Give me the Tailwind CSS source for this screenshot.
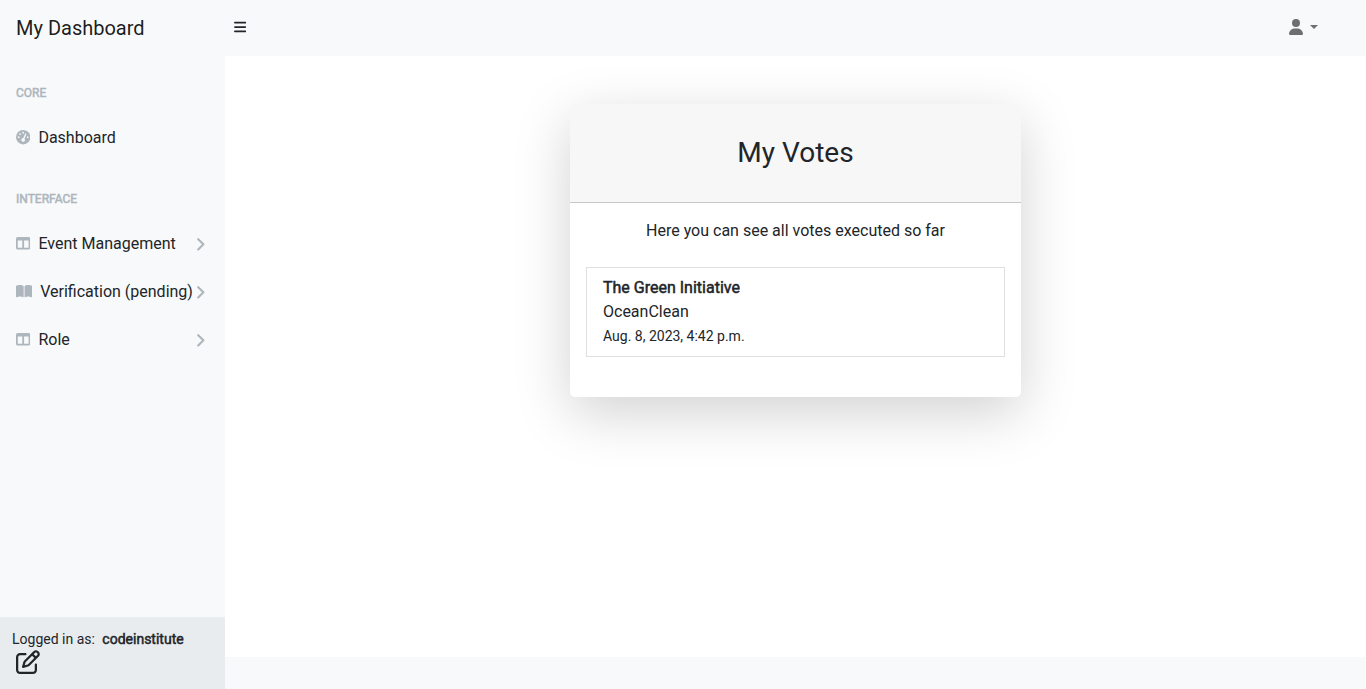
<!DOCTYPE html>
<html lang="en">
<head>
<meta charset="utf-8">
<title>My Dashboard</title>
<script src="https://cdn.jsdelivr.net/npm/@tailwindcss/browser@4"></script>
</head>
<body class="flex h-[689px] flex-col overflow-hidden bg-white font-['Roboto',sans-serif] text-base font-normal text-[#212529]">
<svg class="hidden">
  <symbol id="columns" viewBox="0 0 512 512"><path d="M0 96C0 60.7 28.7 32 64 32H448c35.3 0 64 28.7 64 64V416c0 35.3-28.7 64-64 64H64c-35.3 0-64-28.7-64-64V96zm64 64V416H224V160H64zm384 0H288V416H448V160z"/></symbol>
  <symbol id="angle" viewBox="0 0 8 13"><path d="M1.2 1.2 6.4 6.3 1.2 11.4" fill="none" stroke="currentColor" stroke-width="2.1" stroke-linecap="round" stroke-linejoin="round"/></symbol>
</svg>
<nav class="flex h-14 shrink-0 items-center bg-[#f8f9fa]">
  <a class="w-[225px] pl-4 text-xl text-black/90">My Dashboard</a>
  <button class="ml-2 mb-0.5" aria-label="Menu"><svg class="ml-[1px] h-[14px] w-[12.25px]" viewBox="0 0 448 512" fill="#212529"><path d="M0 96C0 78.3 14.3 64 32 64H416c17.7 0 32 14.3 32 32s-14.3 32-32 32H32C14.3 128 0 113.7 0 96zM0 256c0-17.7 14.3-32 32-32H416c17.7 0 32 14.3 32 32s-14.3 32-32 32H32c-17.7 0-32-14.3-32-32zM448 416c0 17.7-14.3 32-32 32H32c-17.7 0-32-14.3-32-32s14.3-32 32-32H416c17.7 0 32 14.3 32 32z"/></svg></button>
  <div class="mr-12 mb-0.5 ml-auto flex items-center gap-[7px] text-[#6d6e6e]">
    <svg class="h-4 w-[14px]" viewBox="0 0 448 512" fill="currentColor"><path d="M224 256A128 128 0 1 0 224 0a128 128 0 1 0 0 256zm-45.7 48C79.8 304 0 383.8 0 482.3C0 498.7 13.3 512 29.7 512H418.3c16.4 0 29.7-13.3 29.7-29.7C448 383.8 368.2 304 269.7 304H178.3z"/></svg>
    <span class="border-x-[4.8px] border-t-[4.8px] border-x-transparent border-t-current"></span>
  </div>
</nav>
<div class="flex min-h-0 grow">
  <aside class="flex w-[225px] shrink-0 flex-col bg-[#f8f9fa]">
    <div class="grow">
      <div class="px-4 pt-7 pb-3 text-xs leading-[18px] text-[#adb5bd]"><span class="[-webkit-text-stroke:0.5px_currentColor]">CORE</span></div>
      <a class="flex h-12 items-center px-4 pt-px pb-0.5"><svg class="mr-2 size-[14.4px] text-[#adb5bd]" viewBox="0 0 512 512" fill="currentColor"><path fill-rule="evenodd" d="M0 256a256 256 0 1 1 512 0A256 256 0 1 1 0 256zM288 96a32 32 0 1 0-64 0 32 32 0 1 0 64 0zM256 416c35.3 0 64-28.7 64-64c0-17.4-6.9-33.1-18.1-44.6L366 161.7c5.3-12.1-.2-26.3-12.3-31.6s-26.3 .2-31.6 12.3L257.9 288c-.6 0-1.3 0-1.9 0c-35.3 0-64 28.7-64 64s28.7 64 64 64zM176 144a32 32 0 1 0-64 0 32 32 0 1 0 64 0zM96 288a32 32 0 1 0 0-64 32 32 0 1 0 0 64zm352-32a32 32 0 1 0-64 0 32 32 0 1 0 64 0z"/></svg>Dashboard</a>
      <div class="px-4 pt-7 pb-3 text-xs leading-[18px] text-[#adb5bd]"><span class="[-webkit-text-stroke:0.5px_currentColor]">INTERFACE</span></div>
      <a class="flex h-12 items-center px-4 pt-px pb-0.5"><svg class="mr-2 size-[14.4px] text-[#adb5bd]" fill="currentColor"><use href="#columns"/></svg>Event Management<svg class="mt-px mr-1 ml-auto h-[13px] w-2 text-[#adb5bd]"><use href="#angle"/></svg></a>
      <a class="flex h-12 items-center px-4 pt-px pb-0.5 whitespace-nowrap"><svg class="mr-2 h-[14.4px] w-[16.2px] shrink-0 text-[#adb5bd]" viewBox="0 0 576 512" fill="currentColor"><path d="M249.6 471.5c10.8 3.8 22.4-4.1 22.4-15.5V78.6c0-4.2-1.6-8.4-5-11C247.4 52 202.4 32 144 32C93.5 32 46.3 45.3 18.1 56.1C6.8 60.5 0 71.7 0 83.8V454.1c0 11.9 12.8 20.2 24.1 16.5C55.6 460.1 105.5 448 144 448c33.9 0 79 14 105.6 23.5zm76.8 0C353 462 398.1 448 432 448c38.5 0 88.4 12.1 119.9 22.6c11.3 3.8 24.1-4.6 24.1-16.5V83.8c0-12.1-6.8-23.3-18.1-27.6C529.7 45.3 482.5 32 432 32c-58.4 0-103.4 20-123 35.6c-3.3 2.6-5 6.8-5 11V456c0 11.4 11.7 19.3 22.4 15.5z"/></svg>Verification (pending)<svg class="mt-px mr-1 ml-auto h-[13px] w-2 shrink-0 text-[#adb5bd]"><use href="#angle"/></svg></a>
      <a class="flex h-12 items-center px-4 pt-px pb-0.5"><svg class="mr-2 size-[14.4px] text-[#adb5bd]" fill="currentColor"><use href="#columns"/></svg>Role<svg class="mt-px mr-1 ml-auto h-[13px] w-2 text-[#adb5bd]"><use href="#angle"/></svg></a>
    </div>
    <footer class="h-[72px] bg-[#e9ecef] px-3 pt-3">
      <div class="text-sm leading-[21px]">Logged in as: <span class="ml-1 [-webkit-text-stroke:0.5px_currentColor]">codeinstitute</span></div>
      <svg class="ml-1 size-6" viewBox="0 0 512 512" fill="#212529"><path d="M441 58.9L453.1 71c9.4 9.4 9.4 24.6 0 33.9L424 134.1 377.9 88 407 58.9c9.4-9.4 24.6-9.4 33.9 0zM209.8 256.2L344 121.9 390.1 168 255.8 302.2c-2.9 2.9-6.5 5-10.4 6.1l-58.5 16.7 16.7-58.5c1.1-3.9 3.2-7.5 6.1-10.4zM373.1 25L175.8 222.2c-8.7 8.7-15 19.4-18.3 31.1l-28.6 100c-2.4 8.4-.1 17.4 6.1 23.6s15.2 8.5 23.6 6.1l100-28.6c11.8-3.4 22.5-9.7 31.1-18.3L487 138.9c28.1-28.1 28.1-73.7 0-101.8L474.9 25C446.8-3.1 401.2-3.1 373.1 25zM88 64C39.4 64 0 103.4 0 152V424c0 48.6 39.4 88 88 88H360c48.6 0 88-39.4 88-88V312c0-13.3-10.7-24-24-24s-24 10.7-24 24V424c0 22.1-17.9 40-40 40H88c-22.1 0-40-17.9-40-40V152c0-22.1 17.9-40 40-40H200c13.3 0 24-10.7 24-24s-10.7-24-24-24H88z"/></svg>
    </footer>
  </aside>
  <div class="flex grow flex-col">
    <main class="flex grow items-start justify-center pt-12">
      <section class="h-[293px] w-[451px] overflow-hidden rounded-[5px] bg-white shadow-[0_16px_56px_rgba(0,0,0,0.18)]">
        <header class="flex h-[99px] items-center justify-center border-b border-[#c8c8c8] bg-[#f7f7f7]"><h3 class="text-[28px]">My Votes</h3></header>
        <div class="p-4">
          <p class="text-center leading-6">Here you can see all votes executed so far</p>
          <div class="mt-6 h-[90px] border border-[#dfdfdf] px-4 py-2 leading-6">
            <div class="[-webkit-text-stroke:0.5px_currentColor]">The Green Initiative</div>
            <div>OceanClean</div>
            <div class="text-sm leading-6">Aug. 8, 2023, 4:42 p.m.</div>
          </div>
        </div>
      </section>
    </main>
    <footer class="h-8 bg-[#f8f9fa]"></footer>
  </div>
</div>
</body>
</html>
